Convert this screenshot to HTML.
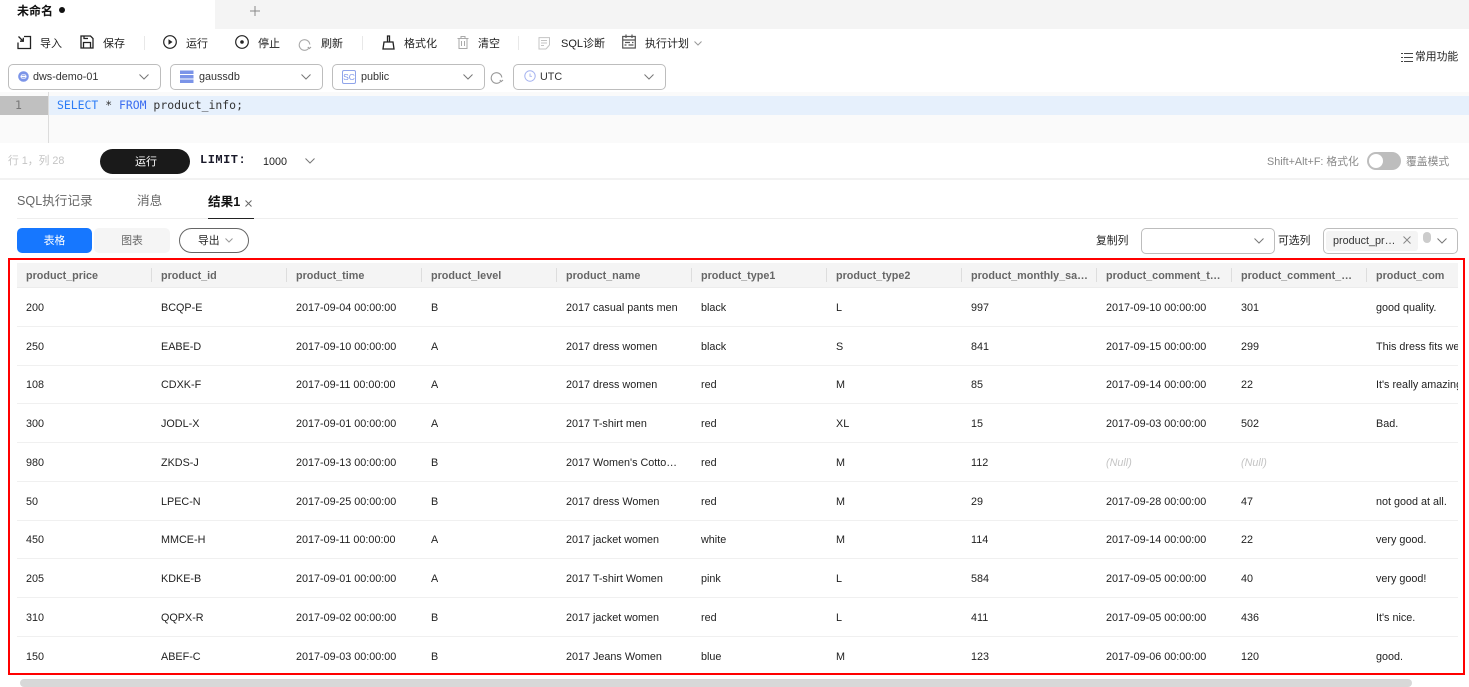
<!DOCTYPE html>
<html><head><meta charset="utf-8"><style>
html,body{margin:0;padding:0;background:#fff}
body{width:1469px;height:685px;overflow:hidden;position:relative;font-family:"Liberation Sans","Noto Sans CJK SC",sans-serif;font-size:10.8px;color:#222}
.a{position:absolute;white-space:nowrap}
.t{position:absolute;white-space:nowrap;line-height:14px;height:14px}
svg{position:absolute;overflow:visible}
.sel{position:absolute;box-sizing:border-box;border:1px solid #bdbdbd;border-radius:5px;background:#fff;height:26px;top:64px}
.sep{position:absolute;top:36px;width:1px;height:14px;background:#e8e8e8}
.row{position:absolute;left:17px;width:1441px;height:38.8px;border-bottom:1px solid #f0f0f0;box-sizing:border-box}
.row span{position:absolute;top:13px;line-height:14px;white-space:nowrap;overflow:hidden;color:#222}
.hd{position:absolute;top:263px;left:17px;width:1441px;height:25px;background:#f4f4f4;border-bottom:1px solid #ececec;box-sizing:border-box}
.hd b{position:absolute;top:5.5px;line-height:14px;color:#666;font-weight:bold;white-space:nowrap;overflow:hidden}
.hd i{position:absolute;top:5px;width:1px;height:14px;background:#ddd}
.n{color:#c4c4c4!important;font-style:italic}
</style></head><body>
<div class="a" style="left:215px;top:0;width:1254px;height:29px;background:#f4f4f4"></div>
<div class="t" style="left:17px;top:4px;font-size:12px;font-weight:bold;color:#111">未命名</div>
<div class="a" style="left:59px;top:7px;width:6px;height:6px;border-radius:50%;background:#111"></div>
<svg style="left:249px;top:5px" width="12" height="12" viewBox="0 0 12 12"><path d="M6 1v10M1 6h10" stroke="#888" stroke-width="1" fill="none"/></svg>

<svg style="left:17px;top:35px" width="15" height="15" viewBox="0 0 15 15" fill="none" stroke="#222" stroke-width="1.3"><path d="M7 1.500H13.500V13.500H1V7.500"/><path d="M1.500 1.500L6 6M6.300 2.800V6.200H3"/></svg>
<div class="t" style="left:40px;top:37px;font-size:11px">导入</div>
<svg style="left:80px;top:35px" width="14" height="14" viewBox="0 0 14 14" fill="none" stroke="#222" stroke-width="1.3"><path d="M1 1H10.500L13 3.500V13H1Z"/><path d="M3.500 13V7.500H10.500V13M4 1V3.500H8"/></svg>
<div class="t" style="left:103px;top:37px;font-size:11px">保存</div>
<div class="sep" style="left:144px"></div>
<svg style="left:163px;top:35px" width="14" height="14" viewBox="0 0 14 14"><circle cx="7" cy="7" r="6.300" fill="none" stroke="#222" stroke-width="1.200"/><path d="M5.500 4.300L9.500 7L5.500 9.700Z" fill="#222"/></svg>
<div class="t" style="left:186px;top:37px;font-size:11px">运行</div>
<svg style="left:235px;top:35px" width="14" height="14" viewBox="0 0 14 14"><circle cx="7" cy="7" r="6.300" fill="none" stroke="#222" stroke-width="1.200"/><circle cx="7" cy="7" r="1.800" fill="#222"/></svg>
<div class="t" style="left:258px;top:37px;font-size:11px">停止</div>
<svg style="left:298px;top:38px" width="13" height="13" viewBox="0 0 13 13" fill="none" stroke="#aaa" stroke-width="1.100"><path d="M10.500 10.500A5.300 5.300 0 1 1 11.800 6.500"/><path d="M9.800 9L11.300 10.500L13 9" stroke="#999"/></svg>
<div class="t" style="left:321px;top:37px;font-size:11px">刷新</div>
<div class="sep" style="left:362px"></div>
<svg style="left:382px;top:35px" width="13" height="15" viewBox="0 0 13 15" fill="none" stroke="#222" stroke-width="1.300"><path d="M1 14L2 7H11L12 14Z"/><path d="M5.500 7V1H7.500V7"/></svg>
<div class="t" style="left:404px;top:37px;font-size:11px">格式化</div>
<svg style="left:457px;top:36px" width="12" height="13" viewBox="0 0 12 13" fill="none" stroke="#aaa" stroke-width="1"><path d="M0.500 2.500H11.500M4 2.500V.5H8V2.500M2 2.500V12.500H10V2.500M4.500 5V10M7.500 5V10"/></svg>
<div class="t" style="left:478px;top:37px;font-size:11px">清空</div>
<div class="sep" style="left:518px"></div>
<svg style="left:538px;top:37px" width="13" height="13" viewBox="0 0 13 13" fill="none" stroke="#c4c4c4" stroke-width="1"><path d="M8 12H1V.6H11.500V8M3 3.500H9M3 6H9M3 8.500H6M8 12L11.500 8"/></svg>
<div class="t" style="left:561px;top:37px;font-size:11px">SQL诊断</div>
<svg style="left:622px;top:34px" width="14" height="15" viewBox="0 0 14 15" fill="none" stroke="#555" stroke-width="1.200"><path d="M.7 2.500H13.300V14H.7ZM4 .5V4M10 .5V4M1 6H13M3 8.500H8M10 8.500H11.500M2.500 11H4.500M6.500 11H11.500"/></svg>
<div class="t" style="left:645px;top:37px;font-size:11px">执行计划</div>
<svg style="left:694px;top:41px" width="8" height="5" viewBox="0 0 8 5" fill="none" stroke="#999"><path d="M.5 .5L4 4L7.500 .5"/></svg>

<svg style="left:1401px;top:52px" width="12" height="11" viewBox="0 0 12 11" fill="none" stroke="#444"><path d="M0 1.500H2M0 5.500H2M0 9.500H2M3 1.500H12M3 5.500H12M3 9.500H12"/></svg>
<div class="t" style="left:1415px;top:50px;font-size:10.800px">常用功能</div>

<div class="sel" style="left:8px;width:153px"></div>
<svg style="left:18px;top:71px" width="11" height="11" viewBox="0 0 11 11"><circle cx="5.500" cy="5.500" r="5.300" fill="#7b94e8"/><path d="M2.500 5.500H8.500" stroke="#fff"/><rect x="3" y="3.800" width="5" height="3.400" rx="1.500" fill="none" stroke="#fff" stroke-width=".8"/></svg>
<div class="t" style="left:33px;top:70px;color:#333">dws-demo-01</div>
<div class="sel" style="left:170px;width:153px"></div>
<svg style="left:180px;top:70px" width="14" height="14" viewBox="0 0 14 14" fill="#7b94e8"><rect y=".5" width="13.500" height="3.500"/><rect y="5" width="13.500" height="3.500"/><rect y="9.500" width="13.500" height="3.500"/></svg>
<div class="t" style="left:199px;top:70px;color:#333">gaussdb</div>
<div class="sel" style="left:332px;width:153px"></div>
<div class="a" style="left:342px;top:70px;width:12px;height:12px;border:1px solid #8fa4ea;border-radius:2px;font-size:8.500px;line-height:12px;text-align:center;color:#7b94e8">SC</div>
<div class="t" style="left:361px;top:70px;color:#333">public</div>
<div class="sel" style="left:513px;width:153px"></div>
<svg style="left:524px;top:70px" width="12" height="12" viewBox="0 0 12 12" fill="none" stroke="#a5b3f0"><circle cx="6" cy="6" r="5.200"/><path d="M6 3.500V6.300H8" stroke-width=".9"/></svg>
<div class="t" style="left:540px;top:70px;color:#333">UTC</div>
<svg style="left:490px;top:71px" width="13" height="13" viewBox="0 0 13 13" fill="none" stroke="#999" stroke-width="1.100"><path d="M10.500 10.500A5.300 5.300 0 1 1 11.800 6.500"/><path d="M9.800 9L11.300 10.500L13 9"/></svg>
<svg style="left:139px;top:74px" width="10" height="6" viewBox="0 0 10 6" fill="none" stroke="#777"><path d="M.5 .5L5 5L9.500 .5"/></svg>
<svg style="left:301px;top:74px" width="10" height="6" viewBox="0 0 10 6" fill="none" stroke="#777"><path d="M.5 .5L5 5L9.500 .5"/></svg>
<svg style="left:463px;top:74px" width="10" height="6" viewBox="0 0 10 6" fill="none" stroke="#777"><path d="M.5 .5L5 5L9.500 .5"/></svg>
<svg style="left:644px;top:74px" width="10" height="6" viewBox="0 0 10 6" fill="none" stroke="#777"><path d="M.5 .5L5 5L9.500 .5"/></svg>

<div class="a" style="left:0;top:92px;width:1469px;height:51px;background:#fafafa"></div>
<div class="a" style="left:48px;top:92px;width:1px;height:51px;background:#dcdcdc"></div>
<div class="a" style="left:0;top:96px;width:48px;height:19px;background:#c0c0c0"></div>
<div class="a" style="left:49px;top:96px;width:1420px;height:19px;background:#e6f0fc"></div>
<div class="a" style="left:15px;top:98px;line-height:14px;font-family:'DejaVu Sans Mono',monospace;font-size:11.450px;color:#777">1</div>
<div class="a" style="left:57px;top:98px;line-height:14px;font-family:'DejaVu Sans Mono',monospace;font-size:11.450px;color:#333"><span style="color:#2b7cf6">SELECT</span> * <span style="color:#3b6cf0">FROM</span> product_info;</div>

<div class="t" style="left:8px;top:154px;color:#c4c4c4;font-size:10.800px">行 1，列 28</div>
<div class="a" style="left:100px;top:149px;width:90px;height:25px;border-radius:13px;background:#1a1a1a"></div>
<div class="t" style="left:135px;top:155px;color:#fff;font-size:11px">运行</div>
<div class="t" style="left:200px;top:153px;font-family:'Liberation Mono',monospace;font-weight:bold;font-size:12px;letter-spacing:.5px;color:#1a1a2a">LIMIT:</div>
<div class="t" style="left:263px;top:155px">1000</div>
<svg style="left:305px;top:158px" width="10" height="6" viewBox="0 0 10 6" fill="none" stroke="#777"><path d="M.5 .5L5 5L9.500 .5"/></svg>
<div class="t" style="left:1267px;top:155px;color:#888">Shift+Alt+F: 格式化</div>
<div class="a" style="left:1367px;top:152px;width:34px;height:18px;border-radius:9px;background:#bdbdbd"></div>
<div class="a" style="left:1369px;top:154px;width:14px;height:14px;border-radius:50%;background:#fff"></div>
<div class="t" style="left:1406px;top:155px;color:#888">覆盖模式</div>
<div class="a" style="left:0;top:178px;width:1469px;height:2px;background:#f2f2f2"></div>

<div class="t" style="left:17px;top:194px;font-size:12.600px;color:#666">SQL执行记录</div>
<div class="t" style="left:137px;top:194px;font-size:12.600px;color:#666">消息</div>
<div class="t" style="left:208px;top:195px;font-size:12.600px;font-weight:bold;color:#111">结果1</div>
<svg style="left:245px;top:200px" width="7" height="7" viewBox="0 0 7 7" stroke="#666"><path d="M.5 .5L6.500 6.500M6.500 .5L.5 6.500"/></svg>
<div class="a" style="left:17px;top:218px;width:1441px;height:1px;background:#eee"></div>
<div class="a" style="left:208px;top:218px;width:46px;height:1px;background:#222"></div>

<div class="a" style="left:17px;top:228px;width:75px;height:25px;border-radius:5px;background:#1677ff;color:#fff;text-align:center;line-height:27px">表格</div>
<div class="a" style="left:94px;top:228px;width:76px;height:25px;border-radius:5px;background:#f5f5f5;color:#666;text-align:center;line-height:27px">图表</div>
<div class="a" style="left:179px;top:228px;width:70px;height:25px;box-sizing:border-box;border:1px solid #666;border-radius:13px"></div>
<div class="t" style="left:198px;top:234px">导出</div>
<svg style="left:225px;top:238px" width="8" height="5" viewBox="0 0 8 5" fill="none" stroke="#999"><path d="M.5 .5L4 4L7.500 .5"/></svg>

<div class="t" style="left:1096px;top:234px">复制列</div>
<div class="a" style="left:1141px;top:228px;width:134px;height:26px;box-sizing:border-box;border:1px solid #bdbdbd;border-radius:5px"></div>
<svg style="left:1254px;top:238px" width="10" height="6" viewBox="0 0 10 6" fill="none" stroke="#777"><path d="M.5 .5L5 5L9.500 .5"/></svg>
<div class="t" style="left:1278px;top:234px">可选列</div>
<div class="a" style="left:1323px;top:228px;width:135px;height:26px;box-sizing:border-box;border:1px solid #bdbdbd;border-radius:5px"></div>
<div class="a" style="left:1326px;top:231px;width:92px;height:20px;background:#f4f4f4;border-radius:3px"></div>
<div class="t" style="left:1333px;top:234px;color:#333">product_pr…</div>
<svg style="left:1403px;top:236px" width="8" height="8" viewBox="0 0 8 8" stroke="#888"><path d="M.5 .5L7.500 7.500M7.500 .5L.5 7.500"/></svg>
<div class="a" style="left:1423px;top:232px;width:8px;height:11px;border-radius:4px;background:#ccc"></div>
<svg style="left:1437px;top:238px" width="10" height="6" viewBox="0 0 10 6" fill="none" stroke="#777"><path d="M.5 .5L5 5L9.500 .5"/></svg>

<div class="hd">
<b style="left:9px">product_price</b><i style="left:134px"></i>
<b style="left:144px">product_id</b><i style="left:269px"></i>
<b style="left:279px">product_time</b><i style="left:404px"></i>
<b style="left:414px">product_level</b><i style="left:539px"></i>
<b style="left:549px">product_name</b><i style="left:674px"></i>
<b style="left:684px">product_type1</b><i style="left:809px"></i>
<b style="left:819px">product_type2</b><i style="left:944px"></i>
<b style="left:954px">product_monthly_sa…</b><i style="left:1079px"></i>
<b style="left:1089px">product_comment_t…</b><i style="left:1214px"></i>
<b style="left:1224px">product_comment_…</b><i style="left:1349px"></i>
<b style="left:1359px;width:68px">product_com</b>
</div>

<div class="row" style="top:288px;height:38.800px"><span style="left:9px">200</span><span style="left:144px">BCQP-E</span><span style="left:279px">2017-09-04 00:00:00</span><span style="left:414px">B</span><span style="left:549px">2017 casual pants men</span><span style="left:684px">black</span><span style="left:819px">L</span><span style="left:954px">997</span><span style="left:1089px">2017-09-10 00:00:00</span><span style="left:1224px">301</span><span style="left:1359px;width:82px">good quality.</span></div>
<div class="row" style="top:326.800px"><span style="left:9px">250</span><span style="left:144px">EABE-D</span><span style="left:279px">2017-09-10 00:00:00</span><span style="left:414px">A</span><span style="left:549px">2017 dress women</span><span style="left:684px">black</span><span style="left:819px">S</span><span style="left:954px">841</span><span style="left:1089px">2017-09-15 00:00:00</span><span style="left:1224px">299</span><span style="left:1359px;width:82px">This dress fits well</span></div>
<div class="row" style="top:365.400px"><span style="left:9px">108</span><span style="left:144px">CDXK-F</span><span style="left:279px">2017-09-11 00:00:00</span><span style="left:414px">A</span><span style="left:549px">2017 dress women</span><span style="left:684px">red</span><span style="left:819px">M</span><span style="left:954px">85</span><span style="left:1089px">2017-09-14 00:00:00</span><span style="left:1224px">22</span><span style="left:1359px;width:82px">It's really amazing</span></div>
<div class="row" style="top:404.400px"><span style="left:9px">300</span><span style="left:144px">JODL-X</span><span style="left:279px">2017-09-01 00:00:00</span><span style="left:414px">A</span><span style="left:549px">2017 T-shirt men</span><span style="left:684px">red</span><span style="left:819px">XL</span><span style="left:954px">15</span><span style="left:1089px">2017-09-03 00:00:00</span><span style="left:1224px">502</span><span style="left:1359px;width:82px">Bad.</span></div>
<div class="row" style="top:443.200px"><span style="left:9px">980</span><span style="left:144px">ZKDS-J</span><span style="left:279px">2017-09-13 00:00:00</span><span style="left:414px">B</span><span style="left:549px">2017 Women's Cotto…</span><span style="left:684px">red</span><span style="left:819px">M</span><span style="left:954px">112</span><span class="n" style="left:1089px">(Null)</span><span class="n" style="left:1224px">(Null)</span></div>
<div class="row" style="top:482px"><span style="left:9px">50</span><span style="left:144px">LPEC-N</span><span style="left:279px">2017-09-25 00:00:00</span><span style="left:414px">B</span><span style="left:549px">2017 dress Women</span><span style="left:684px">red</span><span style="left:819px">M</span><span style="left:954px">29</span><span style="left:1089px">2017-09-28 00:00:00</span><span style="left:1224px">47</span><span style="left:1359px;width:82px">not good at all.</span></div>
<div class="row" style="top:520.400px"><span style="left:9px">450</span><span style="left:144px">MMCE-H</span><span style="left:279px">2017-09-11 00:00:00</span><span style="left:414px">A</span><span style="left:549px">2017 jacket women</span><span style="left:684px">white</span><span style="left:819px">M</span><span style="left:954px">114</span><span style="left:1089px">2017-09-14 00:00:00</span><span style="left:1224px">22</span><span style="left:1359px;width:82px">very good.</span></div>
<div class="row" style="top:559.400px"><span style="left:9px">205</span><span style="left:144px">KDKE-B</span><span style="left:279px">2017-09-01 00:00:00</span><span style="left:414px">A</span><span style="left:549px">2017 T-shirt Women</span><span style="left:684px">pink</span><span style="left:819px">L</span><span style="left:954px">584</span><span style="left:1089px">2017-09-05 00:00:00</span><span style="left:1224px">40</span><span style="left:1359px;width:82px">very good!</span></div>
<div class="row" style="top:598.400px"><span style="left:9px">310</span><span style="left:144px">QQPX-R</span><span style="left:279px">2017-09-02 00:00:00</span><span style="left:414px">B</span><span style="left:549px">2017 jacket women</span><span style="left:684px">red</span><span style="left:819px">L</span><span style="left:954px">411</span><span style="left:1089px">2017-09-05 00:00:00</span><span style="left:1224px">436</span><span style="left:1359px;width:82px">It's nice.</span></div>
<div class="row" style="top:637.200px;border-bottom:0"><span style="left:9px">150</span><span style="left:144px">ABEF-C</span><span style="left:279px">2017-09-03 00:00:00</span><span style="left:414px">B</span><span style="left:549px">2017 Jeans Women</span><span style="left:684px">blue</span><span style="left:819px">M</span><span style="left:954px">123</span><span style="left:1089px">2017-09-06 00:00:00</span><span style="left:1224px">120</span><span style="left:1359px;width:82px">good.</span></div>

<div class="a" style="left:8px;top:258px;width:1457px;height:417px;box-sizing:border-box;border:2px solid #f00"></div>
<div class="a" style="left:20px;top:679px;width:1392px;height:8px;border-radius:4px;background:#d8d8d8"></div>
</body></html>
